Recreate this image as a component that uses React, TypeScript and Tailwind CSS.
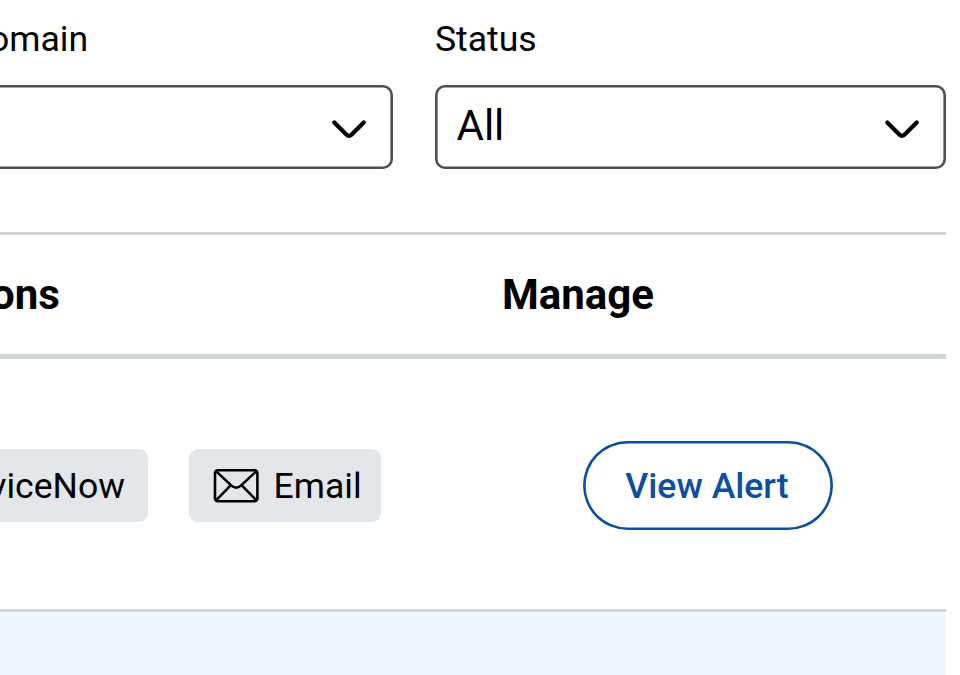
import React from "react";

function Chevron() {
  return (
    <svg className="mt-[5px]" width="34" height="20" viewBox="0 0 34 20" fill="none" stroke="#000" strokeWidth="4.2" strokeLinecap="round" strokeLinejoin="round">
      <path d="M2.3 2.4 14.6 14.8Q17 17.2 19.4 14.8L31.7 2.4" />
    </svg>
  );
}

function Mail() {
  return (
    <svg className="shrink-0" width="46" height="34" viewBox="0 0 46 34" fill="none" stroke="#000" strokeWidth="2.6" strokeLinecap="round" strokeLinejoin="round">
      <rect x="2" y="1.2" width="42.4" height="31" rx="3" />
      <path d="M3 2.1 18.2 16.4Q23.2 21 28.2 16.4L43.4 2.1M3 31.3 17.4 16.6M43.4 31.3 29 16.6" />
    </svg>
  );
}

export default function App() {
  return (
    <div className="h-[675px] w-[960px] overflow-hidden bg-white pr-[14px] font-['Roboto',sans-serif] text-black">
      <div className="flex h-[232px] justify-between pt-[18px]">
        <div className="-ml-[20px] w-[412.5px]">
          <div className="flex h-[67px] items-start pl-[9px] text-[35.6px] leading-[42px]"><span>omain</span></div>
          <div className="flex h-[84px] items-center justify-end rounded-[10px] pr-[27px] shadow-[inset_0_0_0_2.6px_#4b5054]"><Chevron /></div>
        </div>
        <div className="w-[511px]">
          <div className="h-[67px] text-[35.6px] leading-[42px]">Status</div>
          <div className="flex h-[84px] items-center justify-between rounded-[10px] pl-[21.5px] pr-[27px] shadow-[inset_0_0_0_2.6px_#4b5054]">
            <span className="-mt-[2px] text-[42px] leading-[50px]">All</span><Chevron />
          </div>
        </div>
      </div>
      <div className="flex h-[127px] border-t-[3px] border-b-[5px] border-t-[#d2d5d8] border-b-[#d0d5d8] pt-[35px] text-[42px] leading-[50px] font-bold">
        <div className="w-[502px]"><span className="-ml-[9px]">ons</span></div>
        <div>Manage</div>
      </div>
      <div className="flex h-[253px] items-center border-b-[3px] border-[#d0d3d8] pt-[3px] text-[35.6px]">
        <div className="flex h-[73.5px] w-[147.5px] items-center justify-end rounded-r-[9px] bg-[#e3e7e9] pt-[3px] pr-[22.5px]">viceNow</div>
        <div className="ml-[41.5px] flex h-[73.5px] w-[192.3px] items-center gap-[14.5px] rounded-[9px] bg-[#e3e7e9] pl-[24px]"><Mail /><span className="pt-[3px]">Email</span></div>
        <button className="ml-[201.7px] h-[89.5px] w-[250px] rounded-full pt-[3px] pr-[2px] font-medium text-[#0b4ea2] shadow-[inset_0_0_0_2.6px_#0b4ea2]">View Alert</button>
      </div>
      <div className="h-[63px] bg-[#eef6ff]" />
    </div>
  );
}
